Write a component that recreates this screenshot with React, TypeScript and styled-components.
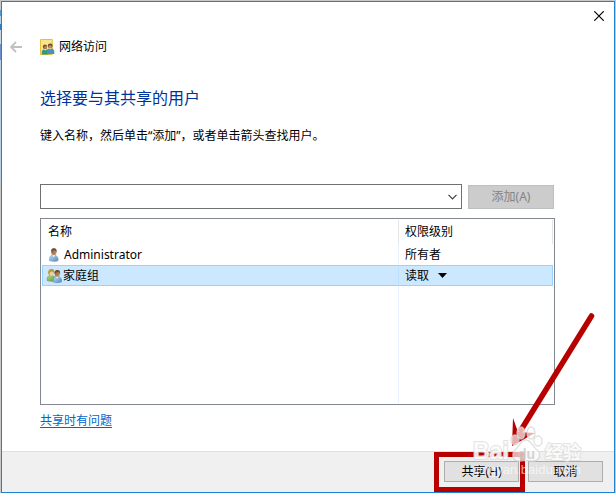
import React from 'react';
import styled, { createGlobalStyle } from 'styled-components';

const GlobalStyle = createGlobalStyle`
  *, *::before, *::after { box-sizing: border-box; }
  body {
    margin: 0;
    color: #000;
    font: 12px/18px "Noto Sans", "Noto Sans CJK SC", sans-serif;
  }
  button, input, select { font: inherit; color: inherit; margin: 0; border-radius: 0; }
`;

const Desktop = styled.div`
  min-height: 100vh;
  display: flex;
  padding: 1px 1px 0;
  background:
    linear-gradient(#4d9ad5 0 6px, #b9cfe4 6px 14px, #2f7ec4 14px 20px, #c9d6e6 20px 34px, #6c8fd0 34px 50px, #b9cfe4 50px) 0 10px / 1px 170px no-repeat,
    #c6c9cc;
`;

const Dialog = styled.main`
  position: relative;
  flex: 1;
  min-width: 0;
  display: flex;
  flex-direction: column;
  background: #fff;
  border: 1px solid #1e83d4;
`;

const TitleBar = styled.div`
  display: flex;
  justify-content: flex-end;
  height: 28px;
`;

const IconButton = styled.button<{ $width: number }>`
  display: flex;
  align-items: center;
  justify-content: center;
  width: ${(p) => p.$width}px;
  padding: 0;
  border: 0;
  background: none;
`;

const NavRow = styled.header`
  display: flex;
  align-items: center;
  height: 34px;
`;

const WizardName = styled.span`
  display: flex;
  align-items: center;
  gap: 4px;
  padding-left: 10px;
`;

const Body = styled.section`
  flex: 1;
  display: flex;
  flex-direction: column;
  padding: 22px 59px 21px 38px;
`;

const Heading = styled.h1`
  margin: 0;
  color: #003399;
  font-size: 16px;
  line-height: 24px;
  font-weight: 400;
`;

const Hint = styled.label`
  margin-top: 17px;
`;

const AddRow = styled.div`
  display: flex;
  align-items: flex-end;
  gap: 6px;
  margin-top: 39px;
  padding-right: 1px;
`;

const Combo = styled.div`
  flex: 1;
  display: flex;
  height: 25px;
  border: 1px solid #707070;
`;

const ComboInput = styled.input`
  flex: 1;
  min-width: 0;
  padding: 0 4px;
  border: 0;
  outline: 0;
  background: none;
`;

const PushButton = styled.button<{ $width: number; $height: number }>`
  position: relative;
  width: ${(p) => p.$width}px;
  height: ${(p) => p.$height}px;
  padding: 0;
  line-height: 18px;
  border: 1px solid #adadad;
  background: #e1e1e1;
  &:disabled { color: #838383; background: #ccc; border-color: #bfbfbf; }
`;

const ListBox = styled.div`
  flex: 1;
  display: flex;
  flex-direction: column;
  margin-top: 9px;
  padding: 1px;
  border: 1px solid #828790;
`;

const Users = styled.table`
  width: 100%;
  table-layout: fixed;
  border-collapse: separate;
  border-spacing: 0;
`;

const Col = styled.col<{ $width?: string }>`
  width: ${(p) => p.$width ?? 'auto'};
`;

const HeadCell = styled.th`
  height: 24px;
  padding: 0 6px;
  text-align: left;
  font-weight: 400;
  border-right: 1px solid #e5e5e5;
`;

const Row = styled.tr<{ $selected?: boolean }>`
  & > td {
    height: 21px;
    padding: 0 6px;
    border: 1px solid transparent;
    border-width: 1px 0;
    ${(p) => p.$selected && 'background: #cce8ff; border-color: #99d1ff;'}
  }
  & > td:first-child {
    padding: 0 3px;
    border-right: 1px solid ${(p) => (p.$selected ? '#bfdfff' : '#e8f1ff')};
    ${(p) => p.$selected && 'border-left: 1px solid #99d1ff;'}
  }
  & > td:last-child { border-right: 1px solid ${(p) => (p.$selected ? '#99d1ff' : 'transparent')}; }
`;

const UserName = styled.span`
  display: flex;
  align-items: center;
  gap: 1px;
  height: 19px;
`;

const Level = styled.span`
  display: flex;
  align-items: center;
  gap: 8px;
  height: 19px;
`;

const LevelSelect = styled.select`
  appearance: none;
  width: 25px;
  padding: 0;
  border: 0;
  background: none;
`;

const EmptyArea = styled.div`
  flex: 1;
  min-height: 20px;
  background: linear-gradient(#e8f1ff, #e8f1ff) calc(100% - 154px) 0 / 1px 100% no-repeat;
`;

const HelpLink = styled.a`
  align-self: flex-start;
  margin-top: 7px;
  color: #0066cc;
  text-decoration: underline;
  text-underline-offset: 2px;
`;

const Footer = styled.footer`
  display: flex;
  justify-content: flex-end;
  gap: 9px;
  padding: 9px 11px 10px;
  border-top: 1px solid #dfdfdf;
  background: #f0f0f0;
`;

const Highlight = styled.span`
  position: absolute;
  inset: -10px -7px -11px -11px;
  border: 5px solid #b90000;
  pointer-events: none;
`;

const Overlay = styled.svg`
  position: absolute;
  right: 0;
  bottom: 0;
  pointer-events: none;
`;

const PersonDefs = () => (
  <defs>
    <linearGradient id="coat" x2="1" y2="1">
      <stop offset="0" stopColor="#c3def2" />
      <stop offset="1" stopColor="#5689b9" />
    </linearGradient>
    <linearGradient id="green" x2="1" y2="1">
      <stop offset="0" stopColor="#b6d783" />
      <stop offset="1" stopColor="#5c9b48" />
    </linearGradient>
    <linearGradient id="face" x2="1" y2="1">
      <stop offset="0" stopColor="#75543b" />
      <stop offset="1" stopColor="#d49b71" />
    </linearGradient>
  </defs>
);

const FolderIcon = () => (
  <svg width="15" height="16" viewBox="0 0 15 16" aria-hidden="true">
    <path d="M.5.5h11.8v15H.5z" fill="#fbe58b" stroke="#e5c03d" />
    <circle cx="5" cy="7.8" r="2.2" fill="#745139" />
    <circle cx="5.6" cy="8.4" r="1.4" fill="#b98462" />
    <path d="M1.8 15.5v-2.2c0-1.8 1-2.7 2.3-2.9l1.2 1 1-.9c1.4.2 2.2 1.4 2.2 3v2z" fill="#379873" />
    <circle cx="10.2" cy="6.8" r="2.4" fill="#68452f" />
    <circle cx="10.2" cy="7.7" r="1.6" fill="#c88962" />
    <path d="M6.9 15V12c0-1.5 1-2.3 2.1-2.5l1.3 1 1.2-1c1.7.3 2.8 1.4 2.8 3V15z" fill="#4b8fc4" />
  </svg>
);

const UserIcon = () => (
  <svg width="17" height="16" viewBox="0 0 17 16" aria-hidden="true">
    <path d="M3.4 13.5c0-3 .7-5 3-5.6h2.3c2.3.6 3.5 2.6 3.5 5.6-1.8 1.2-6.6 1.2-8.8 0z" fill="url(#coat)" stroke="#719dc2" strokeWidth=".6" />
    <path d="M6.4 8l1.4 2.2L9 8z" fill="#fff" />
    <ellipse cx="7.9" cy="4.8" rx="2.7" ry="3.4" fill="url(#face)" />
    <path d="M5.2 5C5 2 6.2 1.1 8 1.2c2 0 2.9 1.5 2.6 3.7-.7-.9-.9-1.7-2.2-1.9-1.2.2-2.3.7-3.2 2z" fill="#64503d" />
  </svg>
);

const GroupIcon = () => (
  <svg width="16" height="16" viewBox="0 0 16 16" aria-hidden="true">
    <path d="M1 12.5c0-2.8.8-4.7 3-5h2.3c2 .4 3.2 2.2 3.2 5-2 1-6.2 1-8.5 0z" fill="url(#green)" stroke="#639b51" strokeWidth=".6" />
    <ellipse cx="5.4" cy="4.6" rx="2.8" ry="3.3" fill="#edd19a" />
    <path d="M2.3 6.3C1.8 2.6 3 1 5.6 1c2.4 0 3.3 1.6 3 4.6C7.5 4.6 7 3.7 5.4 3.5 4 4 3.6 5 3.5 7z" fill="#bd963d" />
    <path d="M7 13.8c0-3 .8-4.9 3-5.4h2.2c2.3.5 3.6 2.4 3.6 5.4-2 1.1-6.6 1.1-8.8 0z" fill="url(#coat)" stroke="#5489b7" strokeWidth=".6" />
    <path d="M9.9 8.5l1.2 2 1.3-2z" fill="#fff" />
    <ellipse cx="11.3" cy="5.5" rx="2.6" ry="3.3" fill="url(#face)" />
    <path d="M8.7 5.7c-.3-2.7.9-3.8 2.7-3.7 2.2 0 3 1.5 2.7 3.8-.8-1-.9-1.7-2.1-2-1.2.2-2.4.7-3.3 1.9z" fill="#664b37" />
  </svg>
);

const Annotation = () => (
  <Overlay width="152" height="192" viewBox="462 300 152 192" aria-hidden="true">
    <path d="M591.5 316L521 430" stroke="#b90000" strokeWidth="5.5" strokeLinecap="round" />
    <path d="M512 446l1-28 5 14 17 1z" fill="#b90000" />
    <g fill="#fff" fillOpacity=".68" stroke="#d6d6d6" strokeOpacity=".75" strokeWidth="1.4">
      <ellipse cx="515" cy="440" rx="4" ry="5" />
      <ellipse cx="521" cy="433" rx="4" ry="6" />
      <ellipse cx="531" cy="433" rx="4" ry="6" />
      <ellipse cx="538" cy="441" rx="4" ry="5" />
      <path d="M526 440c5 0 6 6 10 9 6 4 4 12-3 12-5 0-9-1-14 0-7 0-8-8-3-12 4-3 5-9 10-9z" />
    </g>
    <g fontFamily="Liberation Sans, Noto Sans CJK SC, sans-serif" fontWeight="700">
      <g fill="#fff" fillOpacity=".85" stroke="#dcdcdc" strokeOpacity=".8" strokeWidth="2" strokeLinejoin="round" paintOrder="stroke">
        <text x="473" y="459" fontSize="23">Bai</text>
        <text x="545" y="459" fontSize="18">经验</text>
      </g>
      <text x="518" y="459" fontSize="14" fill="#c9c9c9" fillOpacity=".8">du</text>
    </g>
    <text x="476" y="474" fontSize="13" fontFamily="Liberation Sans, sans-serif" fill="#fff" fillOpacity=".65">jingyan.baidu.com</text>
  </Overlay>
);

export default function App() {
  return (
    <>
      <GlobalStyle />
      <Desktop>
        <Dialog>
          <TitleBar>
            <IconButton $width={30} aria-label="关闭">
              <svg width="10" height="10" viewBox="0 0 10 10">
                <path d="M.3.3l9.4 9.4M9.7.3L.3 9.7" stroke="#000" strokeWidth="1.2" />
              </svg>
            </IconButton>
          </TitleBar>
          <NavRow>
            <IconButton $width={28} aria-label="返回">
              <svg width="12" height="12" viewBox="0 0 12 12">
                <path d="M6 1L1 6l5 5M1 6h11" fill="none" stroke="#c0c0c0" strokeWidth="1.8" />
              </svg>
            </IconButton>
            <WizardName>
              <FolderIcon />
              网络访问
            </WizardName>
          </NavRow>
          <Body>
            <Heading>选择要与其共享的用户</Heading>
            <Hint htmlFor="user">键入名称，然后单击“添加”，或者单击箭头查找用户。</Hint>
            <AddRow>
              <Combo>
                <ComboInput id="user" type="text" />
                <IconButton $width={17} aria-label="查找用户">
                  <svg width="9" height="6" viewBox="0 0 9 6">
                    <path d="M.5.8l4 4 4-4" fill="none" stroke="#404040" strokeWidth="1.2" />
                  </svg>
                </IconButton>
              </Combo>
              <PushButton $width={86} $height={24} disabled>添加(A)</PushButton>
            </AddRow>
            <ListBox>
              <Users>
                <colgroup>
                  <Col />
                  <Col $width="154px" />
                </colgroup>
                <thead>
                  <tr>
                    <HeadCell scope="col">名称</HeadCell>
                    <HeadCell scope="col">权限级别</HeadCell>
                  </tr>
                </thead>
                <tbody>
                  <Row>
                    <td>
                      <UserName>
                        <svg width="0" height="0" aria-hidden="true"><PersonDefs /></svg>
                        <UserIcon />
                        Administrator
                      </UserName>
                    </td>
                    <td><Level>所有者</Level></td>
                  </Row>
                  <Row $selected>
                    <td>
                      <UserName>
                        <GroupIcon />
                        家庭组
                      </UserName>
                    </td>
                    <td>
                      <Level>
                        <LevelSelect aria-label="家庭组 权限级别" defaultValue="read">
                          <option value="read">读取</option>
                        </LevelSelect>
                        <svg width="9" height="5" viewBox="0 0 9 5" aria-hidden="true">
                          <path d="M0 0h9L4.5 5z" />
                        </svg>
                      </Level>
                    </td>
                  </Row>
                </tbody>
              </Users>
              <EmptyArea />
            </ListBox>
            <HelpLink href="#help">共享时有问题</HelpLink>
          </Body>
          <Footer>
            <PushButton $width={75} $height={21}>
              共享(H)
              <Highlight />
            </PushButton>
            <PushButton $width={75} $height={21}>取消</PushButton>
          </Footer>
          <Annotation />
        </Dialog>
      </Desktop>
    </>
  );
}
